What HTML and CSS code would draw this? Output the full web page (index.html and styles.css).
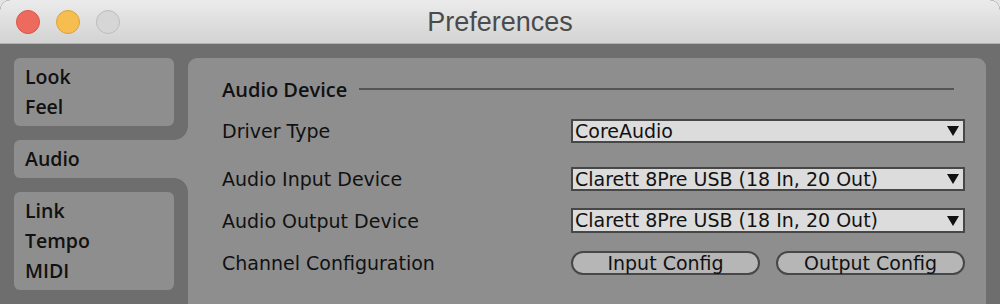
FILE: index.html
```html
<!DOCTYPE html>
<html lang="en">
<head>
<meta charset="utf-8">
<title>Preferences</title>
<link rel="stylesheet" href="styles.css">
</head>
<body>
<div class="window">
  <header class="titlebar">
    <div class="lights">
      <span class="light light-close"></span>
      <span class="light light-min"></span>
      <span class="light light-max"></span>
    </div>
    <div class="title">Preferences</div>
    <div class="spacer"></div>
  </header>
  <div class="content">
    <nav class="sidebar">
      <div class="group">
        <div class="item">Look</div>
        <div class="item">Feel</div>
      </div>
      <div class="group group-active">
        <div class="item">Audio</div>
      </div>
      <div class="group">
        <div class="item">Link</div>
        <div class="item">Tempo</div>
        <div class="item">MIDI</div>
      </div>
    </nav>
    <main class="panel">
      <div class="section-head">
        <span class="section-title">Audio Device</span>
        <span class="section-rule"></span>
      </div>
      <div class="row row-driver">
        <span class="label">Driver Type</span>
        <div class="select"><span class="select-text">CoreAudio</span><span class="arrow"></span></div>
      </div>
      <div class="row row-input">
        <span class="label">Audio Input Device</span>
        <div class="select"><span class="select-text">Clarett 8Pre USB (18 In, 20 Out)</span><span class="arrow"></span></div>
      </div>
      <div class="row row-output">
        <span class="label">Audio Output Device</span>
        <div class="select"><span class="select-text">Clarett 8Pre USB (18 In, 20 Out)</span><span class="arrow"></span></div>
      </div>
      <div class="row row-buttons">
        <span class="label">Channel Configuration</span>
        <div class="buttons">
          <button class="btn">Input Config</button>
          <button class="btn">Output Config</button>
        </div>
      </div>
    </main>
  </div>
</div>
</body>
</html>
```
FILE: styles.css
```css
* { box-sizing: border-box; }

html, body {
  margin: 0;
  padding: 0;
  width: 1000px;
  height: 304px;
  overflow: hidden;
  background: #e4e4e4;
}

.window {
  width: 1000px;
  height: 304px;
  background: #6e6e6e;
  border-radius: 10px 10px 0 0;
  overflow: hidden;
  font-family: "DejaVu Sans", sans-serif;
  color: #111;
}

.titlebar {
  height: 44px;
  display: grid;
  grid-template-columns: 1fr auto 1fr;
  align-items: center;
  background: linear-gradient(#ebebeb, #d3d3d3);
  border-bottom: 1px solid #b2b2b2;
  border-radius: 10px 10px 0 0;
}

.lights {
  display: flex;
  gap: 16px;
  padding-left: 16px;
  padding-top: 1px;
}

.light {
  width: 24px;
  height: 24px;
  border-radius: 50%;
  border: 1px solid;
}
.light-close { background: #ee6a5f; border-color: #d4574c; }
.light-min { background: #f6be4f; border-color: #d9a23e; }
.light-max { background: #d6d6d6; border-color: #bcbcbc; }

.title {
  font-family: "Liberation Sans", Arial, sans-serif;
  font-size: 27px;
  color: #4b4b4b;
  line-height: 1;
  padding-top: 1px;
}

.content {
  display: flex;
  gap: 14px;
  padding: 14px 14px 0 14px;
}

.sidebar {
  width: 160px;
  flex: none;
  display: flex;
  flex-direction: column;
  gap: 14px;
}

.group {
  background: #8e8e8e;
  border-radius: 6px;
  padding: 4px 11px;
  font-family: "Open Sans", "DejaVu Sans", sans-serif;
  font-weight: 600;
  font-size: 19.5px;
}

.item {
  height: 30px;
  line-height: 30px;
}

.group-active {
  position: relative;
  margin-right: -14px;
  border-radius: 6px 0 0 6px;
}

.group-active::before,
.group-active::after {
  content: "";
  position: absolute;
  right: 0;
  width: 14px;
  height: 14px;
}
.group-active::before {
  top: -14px;
  background: radial-gradient(circle at top left, #6e6e6e 13.5px, #8e8e8e 14.2px);
}
.group-active::after {
  bottom: -14px;
  background: radial-gradient(circle at bottom left, #6e6e6e 13.5px, #8e8e8e 14.2px);
}

.panel {
  flex: 1;
  height: 300px;
  background: #8e8e8e;
  border-radius: 9px 9px 0 0;
  padding: 19px 21px 0 34px;
}

.section-head {
  display: flex;
  align-items: center;
  height: 24px;
  padding-right: 11px;
}

.section-title {
  font-family: "Open Sans", "DejaVu Sans", sans-serif;
  font-weight: 600;
  font-size: 20px;
  white-space: nowrap;
}

.section-rule {
  flex: 1;
  height: 2px;
  background: #545454;
  margin-left: 12px;
}

.row {
  display: flex;
  align-items: center;
  height: 24px;
}
.row-driver { margin-top: 18px; }
.row-input { margin-top: 24px; }
.row-output { margin-top: 17px; height: 25px; }
.row-buttons { margin-top: 18px; }

.label {
  width: 349px;
  flex: none;
  font-size: 19px;
  white-space: nowrap;
}

.select {
  flex: 1;
  height: 100%;
  background: #dcdcdc;
  border: 2px solid #474747;
  display: flex;
  align-items: center;
  padding: 0 4px 0 2px;
  font-size: 19px;
}

.select-text {
  flex: 1;
  white-space: nowrap;
  line-height: 1;
}

.arrow {
  width: 0;
  height: 0;
  border-left: 6px solid transparent;
  border-right: 6px solid transparent;
  border-top: 10px solid #111;
}

.buttons {
  flex: 1;
  display: flex;
  gap: 16px;
  height: 100%;
}

.btn {
  flex: 1;
  height: 100%;
  margin: 0;
  padding: 0;
  background: #b6b6b6;
  border: 2px solid #474747;
  border-radius: 12px;
  font-family: "DejaVu Sans", sans-serif;
  font-size: 19px;
  color: #111;
  line-height: 1;
}
```
